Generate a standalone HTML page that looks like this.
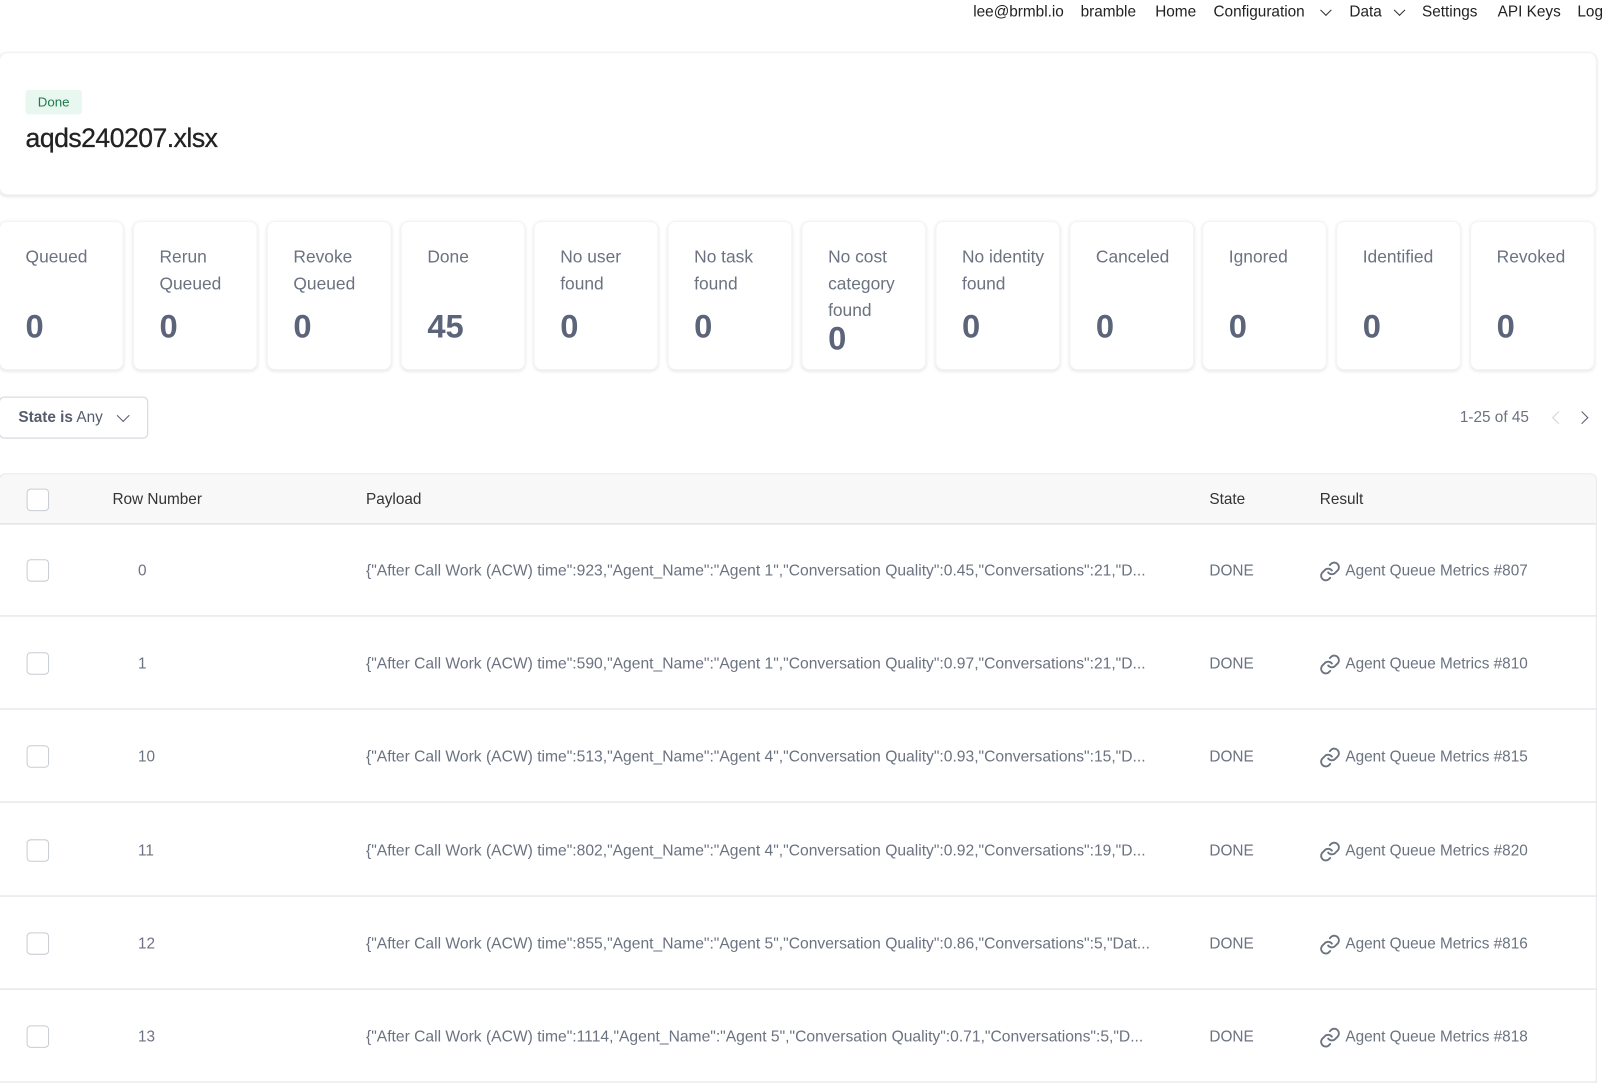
<!DOCTYPE html>
<html><head><meta charset="utf-8"><style>
*{box-sizing:border-box;margin:0;padding:0}
html,body{width:1603px;height:1083px;overflow:hidden;background:#fff}
body{font-family:"Liberation Sans",sans-serif;color:#333;position:relative}
#w{position:absolute;left:0;top:0;width:1568px;height:1059px;overflow:hidden;transform:scale(1.0223);transform-origin:0 0}
.nav{position:absolute;top:3px;left:952px;font-size:15px;color:#222;white-space:nowrap}
.nav span{position:absolute;top:0}
.chev{display:inline-block;width:8px;height:8px;border-right:1.6px solid #333;border-bottom:1.6px solid #333;transform:rotate(45deg);position:absolute}
.head{position:absolute;left:-1px;top:51px;width:1563px;height:140px;border-radius:8px;box-shadow:0 1px 3px rgba(0,0,0,.12);border:1px solid #f0f0f0}
.badge{position:absolute;left:25px;top:88px;width:55px;height:24px;background:#e8f7f0;border-radius:3px;color:#1f7a4c;font-size:13px;text-align:center;line-height:24px}
.title{position:absolute;left:25px;top:120px;font-size:26px;color:#222;letter-spacing:-0.5px;-webkit-text-stroke:0.3px #222}
.card{position:absolute;top:216px;width:122px;height:146px;border-radius:8px;box-shadow:0 1px 3px rgba(0,0,0,.1);border:1px solid #f3f3f3}
.card .l{position:absolute;left:25px;top:22px;font-size:17px;line-height:26px;color:#6b7280}
.card .n{position:absolute;left:25px;top:84px;font-size:32px;font-weight:bold;color:#5b6478}
.filter{position:absolute;left:-1px;top:388px;width:146px;height:41px;border:1px solid #d0d4dc;border-radius:5px;font-size:15px;line-height:40px;padding-left:18px;color:#555c6e}
.tbl{position:absolute;left:-1px;top:463px;width:1563px;height:620px;border:1px solid #e5e7eb;border-radius:6px}
.th{position:absolute;left:0;top:0;width:100%;height:49px;background:#f8f8f8;border-bottom:1px solid #d6d8de;border-radius:6px 6px 0 0}
.cb{position:absolute;left:26px;width:22px;height:22px;border:1px solid #c8ccd4;border-radius:4px;background:#fff}
.t{position:absolute;font-size:15px;white-space:nowrap}
.row{position:absolute;left:0;width:1562px;height:91px;border-bottom:1px solid #dcdee3}
.row .t{top:38px;color:#6b7280}
</style></head><body><div id="w">
<div class="nav">
<span style="left:0">lee@brmbl.io</span>
<span style="left:105px">bramble</span>
<span style="left:178px">Home</span>
<span style="left:235px">Configuration</span><i class="chev" style="left:341px;top:3px"></i>
<span style="left:368px">Data</span><i class="chev" style="left:413px;top:3px"></i>
<span style="left:439px">Settings</span>
<span style="left:513px">API Keys</span>
<span style="left:591px">Log</span>
</div>
<div class="head"></div>
<div class="badge">Done</div>
<div class="title">aqds240207.xlsx</div>

<div class="card" style="left:-1px"><div class="l">Queued</div><div class="n">0</div></div>
<div class="card" style="left:130px"><div class="l">Rerun<br>Queued</div><div class="n">0</div></div>
<div class="card" style="left:261px"><div class="l">Revoke<br>Queued</div><div class="n">0</div></div>
<div class="card" style="left:392px"><div class="l">Done</div><div class="n">45</div></div>
<div class="card" style="left:522px"><div class="l">No user<br>found</div><div class="n">0</div></div>
<div class="card" style="left:653px"><div class="l">No task<br>found</div><div class="n">0</div></div>
<div class="card" style="left:784px"><div class="l">No cost<br>category<br>found</div><div class="n" style="top:96px">0</div></div>
<div class="card" style="left:915px"><div class="l">No identity<br>found</div><div class="n">0</div></div>
<div class="card" style="left:1046px"><div class="l">Canceled</div><div class="n">0</div></div>
<div class="card" style="left:1176px"><div class="l">Ignored</div><div class="n">0</div></div>
<div class="card" style="left:1307px"><div class="l">Identified</div><div class="n">0</div></div>
<div class="card" style="left:1438px"><div class="l">Revoked</div><div class="n">0</div></div>

<div class="filter"><b>State is</b> Any<i class="chev" style="left:116px;top:13px;width:9px;height:9px;border-color:#555c6e"></i></div>
<div class="t" style="left:1428px;top:400px;color:#6b7280">1-25 of 45</div>
<i class="chev" style="left:1520px;top:404px;transform:rotate(135deg);border-color:#d0d4dc;width:9px;height:9px"></i>
<i class="chev" style="left:1543px;top:404px;transform:rotate(-45deg);border-color:#555c6e;width:9px;height:9px"></i>

<div class="tbl">
<div class="th"><div class="cb" style="top:14px"></div>
<div class="t" style="left:110px;top:16px;color:#333">Row Number</div>
<div class="t" style="left:358px;top:16px;color:#333">Payload</div>
<div class="t" style="left:1183px;top:16px;color:#333">State</div>
<div class="t" style="left:1291px;top:16px;color:#333">Result</div></div>
</div>
<div id="rows"></div>
</div>
<script>
var d=[["0",'{"After Call Work (ACW) time":923,"Agent_Name":"Agent 1","Conversation Quality":0.45,"Conversations":21,"D...',"807"],
["1",'{"After Call Work (ACW) time":590,"Agent_Name":"Agent 1","Conversation Quality":0.97,"Conversations":21,"D...',"810"],
["10",'{"After Call Work (ACW) time":513,"Agent_Name":"Agent 4","Conversation Quality":0.93,"Conversations":15,"D...',"815"],
["11",'{"After Call Work (ACW) time":802,"Agent_Name":"Agent 4","Conversation Quality":0.92,"Conversations":19,"D...',"820"],
["12",'{"After Call Work (ACW) time":855,"Agent_Name":"Agent 5","Conversation Quality":0.86,"Conversations":5,"Dat...',"816"],
["13",'{"After Call Work (ACW) time":1114,"Agent_Name":"Agent 5","Conversation Quality":0.71,"Conversations":5,"D...',"818"]];
var tops=[512,603,694,786,877,968],h="";
function esc(s){return s.replace(/&/g,"&amp;").replace(/</g,"&lt;")}
d.forEach(function(r,i){h+='<div class="row" style="top:'+tops[i]+'px"><div class="cb" style="top:35px"></div><div class="t" style="left:135px">'+r[0]+'</div><div class="t" style="left:358px;font-size:15.3px">'+esc(r[1])+'</div><div class="t" style="left:1183px">DONE</div><svg style="position:absolute;left:1290px;top:36px" width="22" height="22" viewBox="0 0 24 24" fill="none" stroke="#6b7280" stroke-width="2" stroke-linecap="round"><path d="M10 13a5 5 0 0 0 7.5.5l3-3a5 5 0 0 0-7-7l-1.7 1.7"/><path d="M14 11a5 5 0 0 0-7.5-.5l-3 3a5 5 0 0 0 7 7l1.7-1.7"/></svg><div class="t" style="left:1316px">Agent Queue Metrics #'+r[2]+'</div></div>'});
document.getElementById("rows").innerHTML=h;
</script>
</body></html>
